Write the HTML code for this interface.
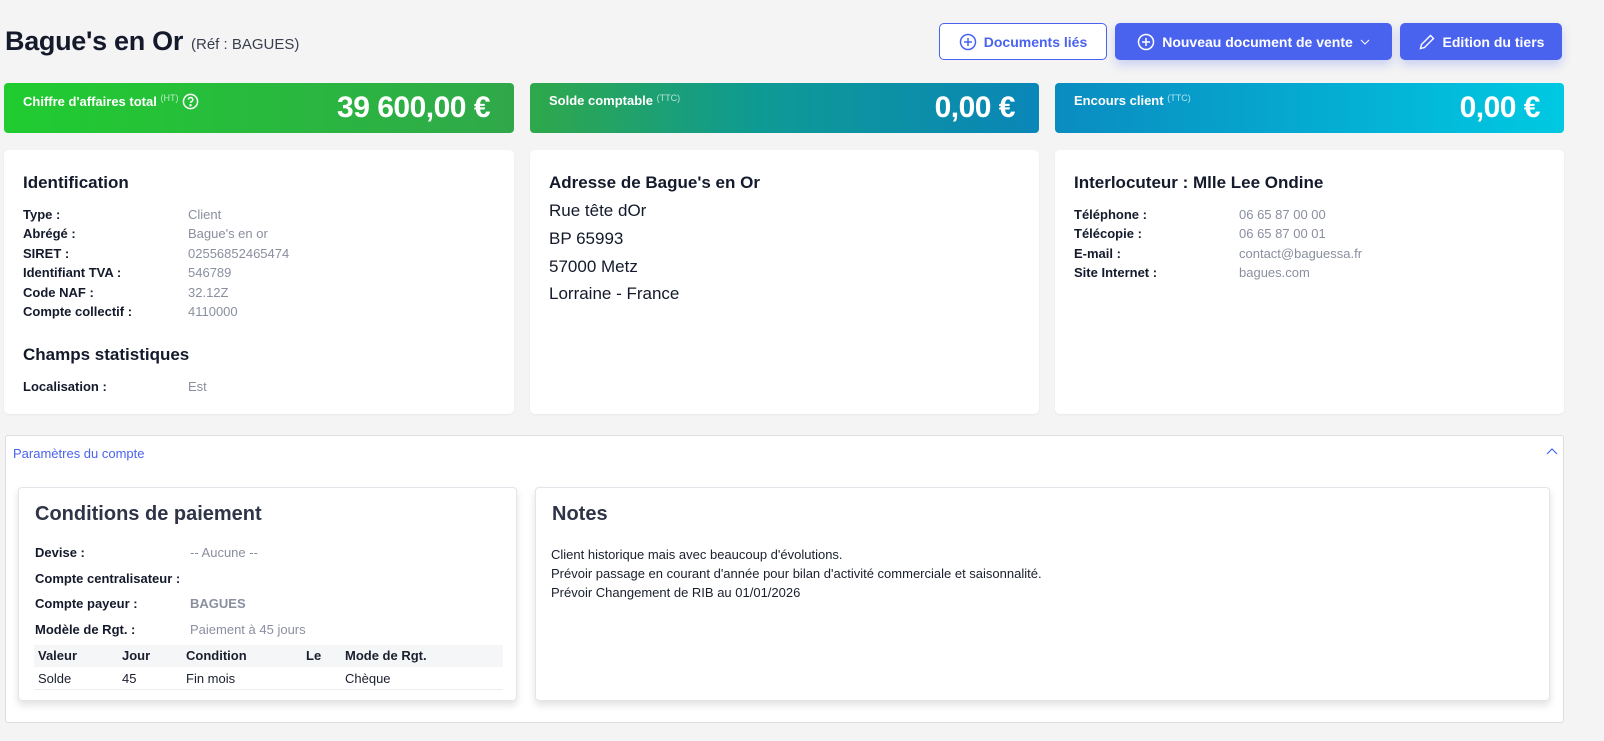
<!DOCTYPE html>
<html><head><meta charset="utf-8"><style>
*{box-sizing:border-box;margin:0;padding:0}
body{width:1604px;height:741px;background:#f4f4f4;font-family:"Liberation Sans",sans-serif;color:#1a1f2e;position:relative;overflow:hidden}
.abs{position:absolute}
h1{position:absolute;left:5px;top:26px;font-size:27px;font-weight:bold;color:#141a2b;letter-spacing:-0.3px}
.ref{position:absolute;left:191px;top:36px;font-size:15px;color:#3a3f4f}
.btn{position:absolute;top:23px;height:37px;border-radius:5px;font-size:14px;font-weight:bold;display:flex;align-items:center;justify-content:center;gap:7px}
.b1{left:939px;width:168px;border:1px solid #4a63ee;color:#4a63ee;background:#fff}
.b2{left:1115px;width:277px;background:#4a63ee;color:#fff;box-shadow:0 5px 10px rgba(74,99,238,.25)}
.b3{left:1400px;width:162px;background:#4a63ee;color:#fff;box-shadow:0 5px 10px rgba(74,99,238,.25)}
.kpi{position:absolute;top:83px;height:50px;border-radius:4px;color:#fff}
.kpi .l{position:absolute;left:19px;top:10px;font-size:13px;font-weight:bold}
.kpi .l small{font-size:9px;font-weight:normal;opacity:.7;vertical-align:top}
.kpi .v{position:absolute;right:24px;top:8px;font-size:30px;font-weight:bold;letter-spacing:-0.5px}
.card{position:absolute;top:150px;height:264px;background:#fff;border-radius:5px;box-shadow:0 1px 2px rgba(0,0,0,.05)}
.card h3{position:absolute;left:19px;top:23px;font-size:17px;font-weight:bold;color:#141a2b}
.row{position:absolute;left:19px;font-size:13px;font-weight:bold;color:#141a2b}
.row span{position:absolute;left:165px;font-weight:normal;color:#8a8fa0;white-space:nowrap}
.addr{position:absolute;left:19px;font-size:17px;color:#141a2b}
.panel{position:absolute;left:5px;top:435px;width:1559px;height:288px;background:#fff;border:1px solid #ddd;border-radius:3px}
.inner{position:absolute;top:487px;height:214px;background:#fff;border:1px solid #e3e5ea;border-radius:4px;box-shadow:0 4px 8px rgba(0,0,0,.12)}
.inner h3{position:absolute;left:16px;top:15px;font-size:20px;font-weight:bold;color:#2f3447}
.pr{position:absolute;left:16px;font-size:13px;font-weight:bold;color:#141a2b}
.pr span{position:absolute;left:155px;font-weight:normal;color:#8a8fa0;white-space:nowrap}
.th{position:absolute;left:15px;top:157px;width:469px;height:22px;background:#f5f6f8}
.td{position:absolute;font-size:13px}
</style></head><body>
<h1>Bague's en Or</h1><div class="ref">(Réf : BAGUES)</div>
<div class="btn b1"><svg width="18" height="18" viewBox="0 0 18 18" fill="none" stroke="#4a63ee" stroke-width="1.5"><circle cx="9" cy="9" r="7.5"/><path d="M9 5v8M5 9h8"/></svg>Documents liés</div>
<div class="btn b2"><svg width="18" height="18" viewBox="0 0 18 18" fill="none" stroke="#fff" stroke-width="1.5"><circle cx="9" cy="9" r="7.5"/><path d="M9 5v8M5 9h8"/></svg>Nouveau document de vente<svg width="10" height="8" viewBox="0 0 10 8" fill="none" stroke="#fff" stroke-width="1"><path d="M1 2l4 4 4-4"/></svg></div>
<div class="btn b3"><svg width="18" height="18" viewBox="0 0 18 18" fill="none" stroke="#fff" stroke-width="1.4"><path d="M12.5 2.5l3 3-9 9-4 1 1-4z"/></svg>Edition du tiers</div>
<div class="kpi" style="left:4px;width:510px;background:linear-gradient(90deg,#20cc30,#30a84a)"><div class="l">Chiffre d'affaires total <small>(HT)</small> <svg width="17" height="17" viewBox="0 0 18 18" fill="none" stroke="#fff" stroke-width="1.6" style="vertical-align:-4px"><circle cx="9" cy="9" r="7.5"/><path d="M6.8 7a2.3 2.3 0 1 1 3 2.2c-.6.3-.8.7-.8 1.3"/><circle cx="9" cy="13" r=".5" fill="#fff"/></svg></div><div class="v">39 600,00 €</div></div>
<div class="kpi" style="left:530px;width:509px;background:linear-gradient(90deg,#2fa84a,#0e9a94 45%,#0a86b8)"><div class="l">Solde comptable <small>(TTC)</small></div><div class="v">0,00 €</div></div>
<div class="kpi" style="left:1055px;width:509px;background:linear-gradient(90deg,#0a8cc0,#00c9e2)"><div class="l">Encours client <small>(TTC)</small></div><div class="v">0,00 €</div></div>

<div class="card" style="left:4px;width:510px"><h3>Identification</h3>
<div class="row" style="top:57px">Type :<span>Client</span></div>
<div class="row" style="top:76px">Abrégé :<span>Bague's en or</span></div>
<div class="row" style="top:96px">SIRET :<span>02556852465474</span></div>
<div class="row" style="top:115px">Identifiant TVA :<span>546789</span></div>
<div class="row" style="top:135px">Code NAF :<span>32.12Z</span></div>
<div class="row" style="top:154px">Compte collectif :<span>4110000</span></div>
<h3 style="top:195px">Champs statistiques</h3>
<div class="row" style="top:229px">Localisation :<span>Est</span></div>
</div>
<div class="card" style="left:530px;width:509px"><h3>Adresse de Bague's en Or</h3>
<div class="addr" style="top:51px">Rue tête dOr</div><div class="addr" style="top:79px">BP 65993</div><div class="addr" style="top:107px">57000 Metz</div><div class="addr" style="top:134px">Lorraine - France</div></div>
<div class="card" style="left:1055px;width:509px"><h3>Interlocuteur : Mlle Lee Ondine</h3>
<div class="row" style="top:57px">Téléphone :<span>06 65 87 00 00</span></div>
<div class="row" style="top:76px">Télécopie :<span>06 65 87 00 01</span></div>
<div class="row" style="top:96px">E-mail :<span>contact@baguessa.fr</span></div>
<div class="row" style="top:115px">Site Internet :<span>bagues.com</span></div></div>

<div class="panel"><div class="abs" style="left:7px;top:10px;font-size:13px;color:#4a63ee">Paramètres du compte</div>
<svg class="abs" style="left:1540px;top:12px" width="12" height="8" viewBox="0 0 12 8" fill="none" stroke="#4a63ee" stroke-width="1.2"><path d="M1 6l5-5 5 5"/></svg></div>
<div class="inner" style="left:18px;width:499px"><h3>Conditions de paiement</h3>
<div class="pr" style="top:57px">Devise :<span>-- Aucune --</span></div>
<div class="pr" style="top:83px">Compte centralisateur :</div>
<div class="pr" style="top:108px">Compte payeur :<span style="font-weight:bold">BAGUES</span></div>
<div class="pr" style="top:134px">Modèle de Rgt. :<span>Paiement à 45 jours</span></div>
<div class="th"></div>
<div class="td" style="left:19px;top:160px;font-weight:bold">Valeur</div><div class="td" style="left:103px;top:160px;font-weight:bold">Jour</div><div class="td" style="left:167px;top:160px;font-weight:bold">Condition</div><div class="td" style="left:287px;top:160px;font-weight:bold">Le</div><div class="td" style="left:326px;top:160px;font-weight:bold">Mode de Rgt.</div>
<div class="td" style="left:19px;top:183px">Solde</div><div class="td" style="left:103px;top:183px">45</div><div class="td" style="left:167px;top:183px">Fin mois</div><div class="td" style="left:326px;top:183px">Chèque</div>
<div class="abs" style="left:15px;top:201px;width:469px;border-top:1px solid #eee"></div>
</div>
<div class="inner" style="left:535px;width:1015px"><h3>Notes</h3>
<div class="td" style="left:15px;top:57px;line-height:19px">Client historique mais avec beaucoup d'évolutions.<br>Prévoir passage en courant d'année pour bilan d'activité commerciale et saisonnalité.<br>Prévoir Changement de RIB au 01/01/2026</div></div>
</body></html>
